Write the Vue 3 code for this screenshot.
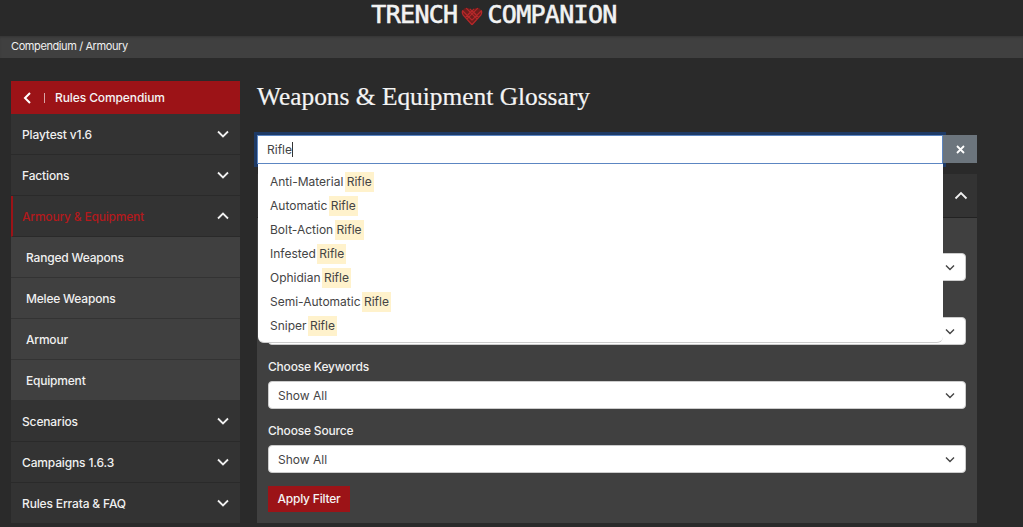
<script setup>
const menu = [
  { label: 'Playtest v1.6' },
  { label: 'Factions' },
  { label: 'Armoury & Equipment', open: true, subs: ['Ranged Weapons', 'Melee Weapons', 'Armour', 'Equipment'] },
  { label: 'Scenarios' },
  { label: 'Campaigns 1.6.3' },
  { label: 'Rules Errata & FAQ' }
]
const filters = [
  { label: '', value: '' },
  { label: '', value: '' },
  { label: 'Choose Keywords', value: 'Show All' },
  { label: 'Choose Source', value: 'Show All' }
]
const options = ['Anti-Material', 'Automatic', 'Bolt-Action', 'Infested', 'Ophidian', 'Semi-Automatic', 'Sniper']
</script>

<template>
  <div class="page">
    <header class="top">
      <span class="brand">TRENCH</span>
      <svg class="heart" width="22" height="20" viewBox="0 0 26 24" fill="none">
        <path d="M13 22.5 L2.5 11 Q0.5 8 2 5 Q3.5 2.5 6.5 2 Q10 2 13 5.5 Q16 2 19.5 2 Q22.5 2.5 24 5 Q25.5 8 23.5 11 Z" fill="#6e1d1c" />
        <path d="M13 22.5 L2.5 11 Q0.5 8 2 5 M13 22.5 L23.5 11 Q25.5 8 24 5 M6 2.5 L19 15.5 M10.5 3.5 L21 14 M2 6 L13 17 M20 2.5 L7 15.5 M15.5 3.5 L5 14 M24 6 L13 17 M13 5.5 L8 10.5 M13 5.5 L18 10.5" stroke="#b5282a" stroke-width="1.5" />
      </svg>
      <span class="brand">COMPANION</span>
    </header>
    <div class="crumb">Compendium / Armoury</div>

    <div class="layout">
      <aside class="side">
        <div class="side-head">
          <svg width="9" height="12" viewBox="0 0 9 12" fill="none"><path d="M7 1 L2 6 L7 11" stroke="#fff" stroke-width="2" /></svg>
          <i class="bar"></i>
          <span>Rules Compendium</span>
        </div>
        <template v-for="m in menu" :key="m.label">
          <div class="row" :class="{ active: m.open }">
            <span>{{ m.label }}</span>
            <svg class="chev" width="12" height="8" viewBox="0 0 12 8" fill="none">
              <path :d="m.open ? 'M1 6.5 L6 1.5 L11 6.5' : 'M1 1.5 L6 6.5 L11 1.5'" stroke="#f0f0f0" stroke-width="1.8" />
            </svg>
          </div>
          <div v-for="s in m.subs" :key="s" class="sub">{{ s }}</div>
        </template>
      </aside>

      <main class="main">
        <h1>Weapons &amp; Equipment Glossary</h1>

        <div class="search">
          <div class="field">Rifle<i class="caret"></i></div>
          <button class="clear">
            <svg width="9" height="9" viewBox="0 0 9 9" fill="none"><path d="M1 1 L8 8 M8 1 L1 8" stroke="#fff" stroke-width="1.8" /></svg>
          </button>
          <ul class="drop">
            <li v-for="o in options" :key="o">{{ o }} <mark>Rifle</mark></li>
          </ul>
        </div>

        <section class="panel">
          <div class="panel-head">
            <svg width="14" height="9" viewBox="0 0 14 9" fill="none"><path d="M1.5 7.5 L7 2 L12.5 7.5" stroke="#f0f0f0" stroke-width="1.8" /></svg>
          </div>
          <div class="panel-body">
            <div v-for="(f, i) in filters" :key="i" class="group">
              <label>{{ f.label }}</label>
              <div class="select">
                <span>{{ f.value }}</span>
                <svg width="10" height="7" viewBox="0 0 10 7" fill="none"><path d="M1 1.5 L5 5.5 L9 1.5" stroke="#444" stroke-width="1.4" /></svg>
              </div>
            </div>
            <button class="apply">Apply Filter</button>
          </div>
        </section>
      </main>
    </div>
  </div>
</template>

<style>
html, body { margin: 0; background: #2a2a2a; overflow: hidden; }
</style>

<style scoped>
.page { width: 1023px; height: 527px; overflow: hidden; background: #2a2a2a; font-family: Inter, "Liberation Sans", sans-serif; color: #f0f0f0; }
.top { height: 36px; display: flex; align-items: center; justify-content: center; gap: 4px; padding-right: 35px; box-sizing: border-box; background: #292929; }
.brand { font-family: "DejaVu Sans Mono", monospace; font-weight: 400; font-size: 25px; letter-spacing: -0.7px; line-height: 28px; color: #f2f2f2; margin-top: -6px; -webkit-text-stroke: 0.6px #f2f2f2; }
.heart { margin-top: -4px; }
.crumb { height: 22px; line-height: 21px; background: #404040; font-size: 11px; font-weight: 400; letter-spacing: -0.4px; padding-left: 11px; box-shadow: inset 0 2px 3px -1px rgba(0,0,0,.2); }
.layout { display: flex; padding: 23px 46px 0 11px; gap: 17px; }
.side { width: 229px; flex: none; }
.side-head { height: 33px; background: #9c1317; display: flex; align-items: center; padding-left: 12px; font-size: 12px; font-weight: 500; letter-spacing: -0.1px; color: #f4f4f4; }
.bar { width: 1px; height: 10px; background: #d8a5a5; margin: 0 10px 0 12px; }
.row { height: 40px; background: #333; border-bottom: 1px solid #2a2a2a; display: flex; align-items: center; justify-content: space-between; padding: 0 11px; font-size: 12px; font-weight: 500; letter-spacing: -0.15px; }
.row.active { color: #b3191c; border-left: 2px solid #9c1317; padding-left: 9px; letter-spacing: -0.2px; }
.sub { height: 40px; line-height: 41px; background: #404040; border-bottom: 1px solid #333; padding-left: 15px; font-size: 12px; font-weight: 500; letter-spacing: -0.2px; }
.main { flex: 1; min-width: 0; }
h1 { margin: 0; height: 54px; font-family: "Liberation Serif", serif; font-weight: 400; font-size: 25.4px; line-height: 30px; color: #f4f4f4; -webkit-text-stroke: 0.2px #f4f4f4; }
.search { position: relative; display: flex; height: 29px; }
.field { flex: 1; background: #fff; color: #444; font-size: 12px; line-height: 27px; padding-left: 9px; border: 1px solid #5c86c2; box-shadow: 0 0 0 3px #1e3a66; position: relative; z-index: 1; box-sizing: border-box; }
.caret { display: inline-block; width: 1px; height: 15px; background: #333; vertical-align: -3px; }
.clear { position: relative; z-index: 2; width: 34px; height: 28px; border: 0; padding: 0; background: #6c757d; display: flex; align-items: center; justify-content: center; }
.drop { position: absolute; z-index: 2; left: 1px; top: 29px; width: 685px; height: 179px; margin: 0; padding: 6px 0 0 12px; list-style: none; box-sizing: border-box; background: #fff; border-radius: 0 0 6px 6px; border-bottom: 1px solid #ccc; }
.drop li { height: 24px; line-height: 24px; font-size: 12px; color: #444; }
.drop mark { display: inline-block; height: 20px; line-height: 20px; background: #fff2cc; color: #444; padding: 0 2px; margin-left: -2px; }
.panel { margin-top: 10px; }
.panel-head { height: 43px; background: #333; border-bottom: 1px solid #222; display: flex; align-items: center; justify-content: flex-end; padding: 0 9px 0 11px; }
.panel-body { height: 305px; box-sizing: border-box; background: #404040; padding: 10px 11px; }
.group { height: 64px; }
label { display: block; height: 20px; line-height: 22px; margin-bottom: 5px; font-size: 12px; font-weight: 500; letter-spacing: -0.2px; color: #f0f0f0; }
.select { height: 28px; background: #fff; border-radius: 4px; border: 1px solid #ccc; box-sizing: border-box; display: flex; align-items: center; justify-content: space-between; padding: 0 10px 0 9px; font-size: 12px; color: #444; }
.apply { margin-top: 2px; display: block; width: 82px; height: 26px; border: 0; padding: 0 0 1px; background: #9c1317; color: #f4f4f4; font-family: inherit; font-size: 12px; font-weight: 500; letter-spacing: -0.2px; }
</style>
